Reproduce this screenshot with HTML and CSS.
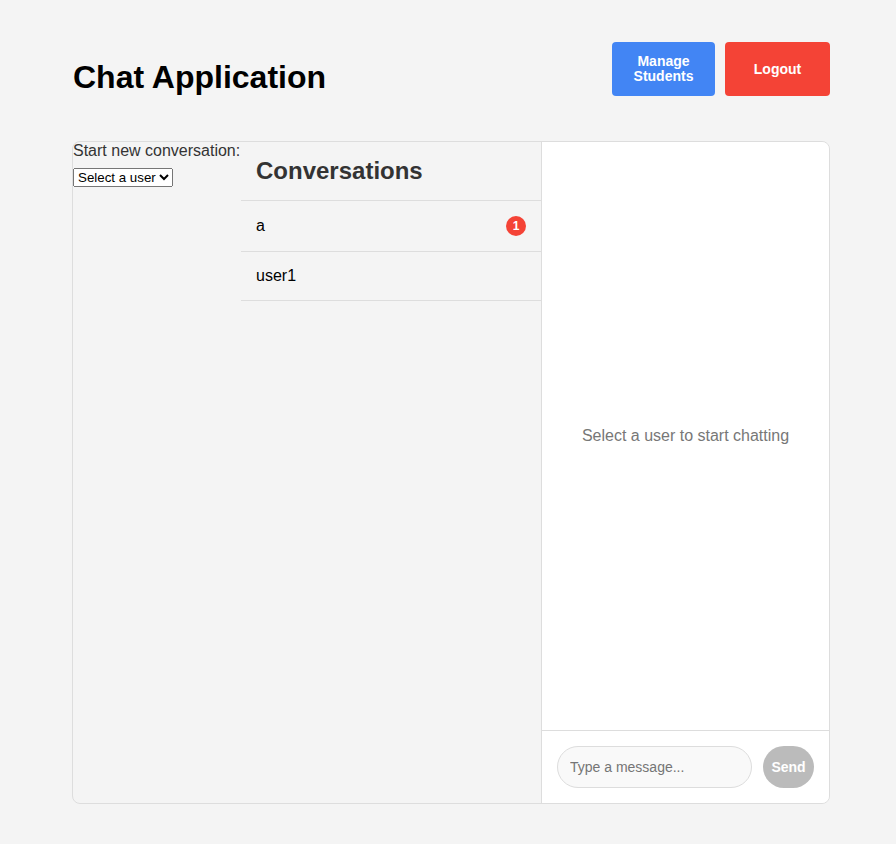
FILE: index.html
```html
<!DOCTYPE html>
<html>
<head>
<meta charset="utf-8">
<link rel="stylesheet" href="styles.css">
</head>
<body>
<div class="app">
  <header class="header">
    <h1 class="title">Chat Application</h1>
    <div class="actions">
      <button class="btn btn-blue">Manage<br>Students</button>
      <button class="btn btn-red">Logout</button>
    </div>
  </header>
  <main class="chat-box">
    <div class="new-conv">
      <label class="new-label">Start new conversation:</label>
      <select class="user-select">
        <option>Select a user</option>
        <option>a</option>
        <option>user1</option>
      </select>
    </div>
    <div class="conv-list">
      <h2 class="conv-title">Conversations</h2>
      <div class="conv-item"><span>a</span><span class="badge">1</span></div>
      <div class="conv-item"><span>user1</span></div>
    </div>
    <section class="chat-area">
      <div class="messages">Select a user to start chatting</div>
      <div class="composer">
        <input class="msg-input" type="text" placeholder="Type a message...">
        <button class="send-btn" disabled>Send</button>
      </div>
    </section>
  </main>
</div>
</body>
</html>
```

FILE: styles.css
```css
html, body {
  margin: 0;
  padding: 0;
  background: #f4f4f4;
  font-family: "Liberation Sans", Arial, sans-serif;
}

.app {
  width: 758px;
  margin-left: 72px;
  padding-top: 42px;
}

.header {
  display: flex;
  justify-content: space-between;
  align-items: flex-end;
}

.title {
  margin: 0 0 0 1px;
  font-size: 32px;
  font-weight: bold;
  color: #000;
  line-height: 37px;
}

.actions {
  display: flex;
  gap: 10px;
}

.btn {
  height: 54px;
  border: none;
  border-radius: 4px;
  color: #fff;
  font-family: "Liberation Sans", Arial, sans-serif;
  font-size: 14px;
  font-weight: bold;
  line-height: 15px;
  padding: 0;
}

.btn-blue {
  width: 103px;
  background: #4285f4;
}

.btn-red {
  width: 105px;
  background: #f44336;
}

.chat-box {
  margin-top: 45px;
  height: 661px;
  border: 1px solid #ddd;
  border-radius: 8px;
  display: flex;
  overflow: hidden;
  background: #f4f4f4;
}

.new-conv {
  width: 168px;
  flex-shrink: 0;
}

.new-label {
  display: block;
  font-size: 16px;
  line-height: 18px;
  color: #333;
  white-space: nowrap;
  margin-bottom: 8px;
}

.user-select {
  display: block;
  margin: 0;
  font-family: "Liberation Sans", Arial, sans-serif;
  font-size: 13.33px;
  width: 100px;
  height: 19px;
}

.conv-list {
  width: 300px;
  flex-shrink: 0;
}

.conv-title {
  margin: 0;
  padding: 15px;
  font-size: 24px;
  line-height: 28px;
  color: #333;
  border-bottom: 1px solid #ddd;
}

.conv-item {
  display: flex;
  justify-content: space-between;
  align-items: center;
  padding: 15px;
  font-size: 16px;
  line-height: 18px;
  color: #000;
  border-bottom: 1px solid #ddd;
}

.badge {
  width: 20px;
  height: 20px;
  border-radius: 50%;
  background: #f44336;
  color: #fff;
  font-size: 12px;
  font-weight: bold;
  display: flex;
  align-items: center;
  justify-content: center;
}

.chat-area {
  flex: 1 1 0;
  min-width: 0;
  background: #fff;
  border-left: 1px solid #ddd;
  display: flex;
  flex-direction: column;
}

.messages {
  flex: 1;
  display: flex;
  align-items: center;
  justify-content: center;
  color: #777;
  font-size: 16px;
}

.composer {
  border-top: 1px solid #ddd;
  padding: 15px;
  display: flex;
  gap: 11px;
}

.msg-input {
  flex: 1 1 0;
  min-width: 0;
  width: 0;
  height: 42px;
  box-sizing: border-box;
  border: 1px solid #ddd;
  border-radius: 21px;
  background: #f9f9f9;
  padding: 0 12px;
  font-family: "Liberation Sans", Arial, sans-serif;
  font-size: 14px;
  outline: none;
}

.msg-input::placeholder {
  color: #757575;
}

.send-btn {
  flex-shrink: 0;
  width: 51px;
  height: 42px;
  border: none;
  border-radius: 21px;
  background: #bbb;
  color: #fff;
  font-family: "Liberation Sans", Arial, sans-serif;
  font-size: 14px;
  font-weight: bold;
  padding: 0;
}
```
